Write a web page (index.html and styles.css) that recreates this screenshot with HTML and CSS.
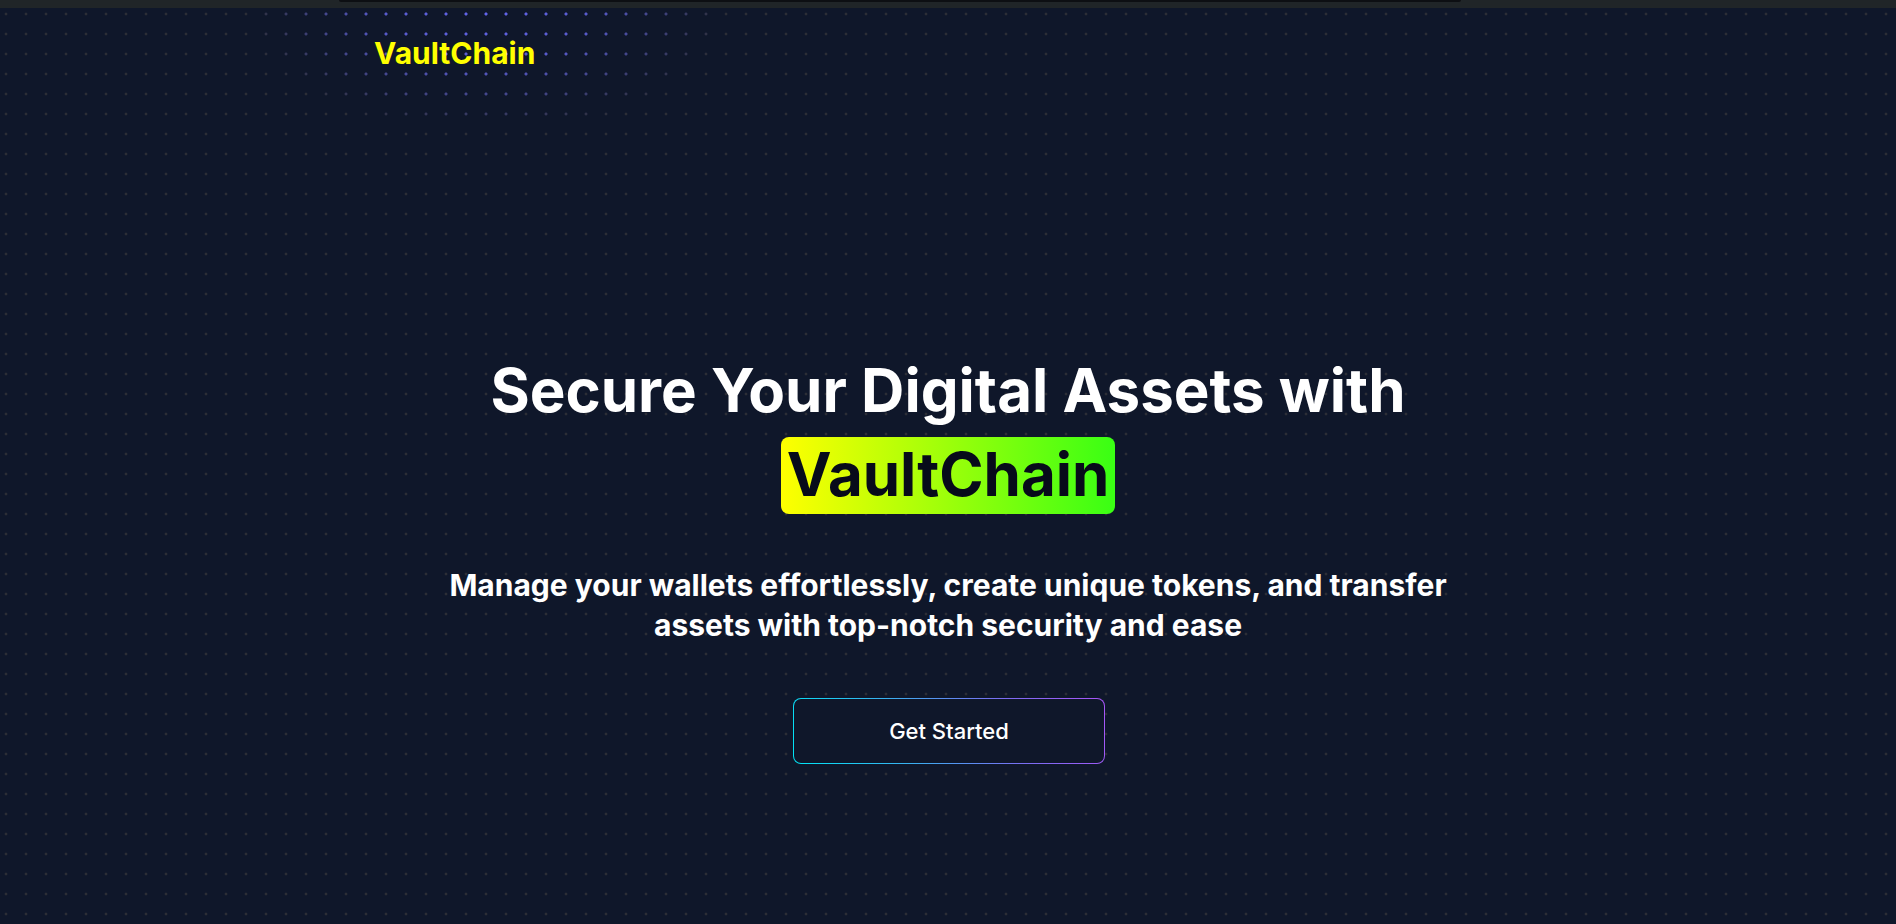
FILE: index.html
```html
<!DOCTYPE html>
<html lang="en">
<head>
<meta charset="utf-8">
<title>VaultChain</title>
<link rel="stylesheet" href="styles.css">
</head>
<body>
<div class="page">
  <div class="glow"></div>
  <div class="topbar"><div class="topbar-notch"></div></div>
  <header class="header">
    <div class="logo">VaultChain</div>
  </header>
  <main class="hero">
    <h1 class="title">
      <span class="title-line">Secure Your Digital Assets with</span>
      <span class="title-hl">VaultChain</span>
    </h1>
    <p class="subtitle">Manage your wallets effortlessly, create unique tokens, and transfer<br>assets with top-notch security and ease</p>
    <button class="cta">Get Started</button>
  </main>
</div>
</body>
</html>
```

FILE: styles.css
```css
* { box-sizing: border-box; }
html, body { margin: 0; padding: 0; }
body {
  background: #0f172a;
  font-family: Inter, "Noto Sans", sans-serif;
  color: #fff;
}
.page {
  position: relative;
  min-height: 924px;
  overflow: hidden;
  background-color: #0f172a;
  background-image: radial-gradient(circle at center, #2c2e36 1.2px, transparent 1.7px);
  background-size: 20px 20px;
  background-position: -4px 4px;
}
.glow {
  position: absolute;
  left: 0; top: 0;
  width: 100%; height: 200px;
  background-image: radial-gradient(circle at center, #6366f1 1.3px, transparent 1.8px);
  background-size: 20px 20px;
  background-position: -4px 4px;
  -webkit-mask-image: radial-gradient(ellipse 240px 125px at 486px 10px, #000 0%, rgba(0,0,0,0.8) 45%, rgba(0,0,0,0.35) 75%, transparent 100%);
  mask-image: radial-gradient(ellipse 240px 125px at 486px 10px, #000 0%, rgba(0,0,0,0.8) 45%, rgba(0,0,0,0.35) 75%, transparent 100%);
  pointer-events: none;
}
.topbar {
  position: relative;
  height: 8px;
  background: #202528;
}
.topbar-notch {
  margin-left: 339px;
  width: 1122px;
  height: 2px;
  background: #0d0f13;
  border-radius: 0 0 6px 6px;
}
.header {
  position: relative;
  max-width: 1148px;
  margin: 0 auto;
  padding-top: 27px;
}
.logo {
  font-size: 30px;
  line-height: 36px;
  font-weight: 700;
  color: #ffff00;
}
.hero {
  position: relative;
  display: flex;
  flex-direction: column;
  align-items: center;
  text-align: center;
  padding-top: 286px;
}
.title {
  margin: 0;
  display: flex;
  flex-direction: column;
  align-items: center;
  font-weight: 700;
}
.title-line {
  font-size: 60px;
  line-height: 66px;
}
.title-hl {
  margin-top: 14px;
  font-size: 60px;
  line-height: 60px;
  padding: 7px 6px 10px;
  border-radius: 8px;
  color: #070b1a;
  background: linear-gradient(90deg, #ffff00 0%, #39ff14 100%);
}
.subtitle {
  margin: 51px 0 0;
  font-size: 30px;
  line-height: 40px;
  font-weight: 700;
}
.cta {
  margin-top: 53px;
  margin-left: 2px;
  padding: 21px 95px;
  font-family: Inter, "Noto Sans", sans-serif;
  font-size: 22px;
  line-height: 22px;
  font-weight: 500;
  min-height: 66px;
  color: #fff;
  border: 1px solid transparent;
  border-radius: 8px;
  background:
    linear-gradient(#0f172a, #0f172a) padding-box,
    linear-gradient(70deg, #00e5f5 0%, #3ab0f0 35%, #7c6cf2 70%, #a855f7 100%) border-box;
  cursor: pointer;
}
```
